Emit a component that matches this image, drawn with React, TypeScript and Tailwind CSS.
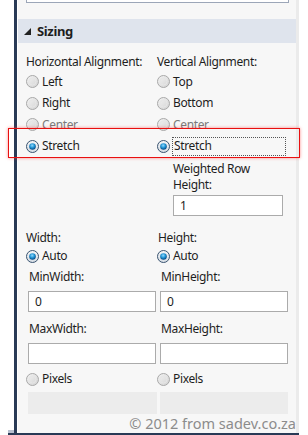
import React from "react";

function Radio({ checked }: { checked?: boolean }) {
  if (checked) {
    return (
      <svg width="13" height="13" viewBox="0 0 13 13" className="shrink-0">
        <defs>
          <radialGradient id="rb" cx="0.45" cy="0.35" r="0.6">
            <stop offset="0" stopColor="#8fd8ff" />
            <stop offset="0.6" stopColor="#1a8fd0" />
            <stop offset="1" stopColor="#0b4f8a" />
          </radialGradient>
          <linearGradient id="rbo" x1="0" y1="0" x2="0" y2="1">
            <stop offset="0" stopColor="#f4f6f8" />
            <stop offset="1" stopColor="#d6dde4" />
          </linearGradient>
        </defs>
        <circle cx="6.5" cy="6.5" r="6" fill="url(#rbo)" stroke="#3a5470" strokeWidth="1" />
        <circle cx="6.5" cy="6.5" r="3.3" fill="url(#rb)" />
      </svg>
    );
  }
  return (
    <svg width="13" height="13" viewBox="0 0 13 13" className="shrink-0">
      <defs>
        <linearGradient id="ru" x1="0" y1="0" x2="1" y2="1">
          <stop offset="0" stopColor="#f4f4f4" />
          <stop offset="1" stopColor="#d2d2d2" />
        </linearGradient>
      </defs>
      <circle cx="6.5" cy="6.5" r="6" fill="url(#ru)" stroke="#a8a8a8" strokeWidth="1" />
      <circle cx="6.5" cy="6.5" r="3.5" fill="none" stroke="#e6e6e6" strokeWidth="1" />
    </svg>
  );
}

function RadioRow({ label, checked, focus, gray }: { label: string; checked?: boolean; focus?: boolean; gray?: boolean }) {
  return (
    <div className="flex h-[21.5px] items-center">
      <Radio checked={checked} />
      {focus ? (
        <span className="ml-[2px] flex h-[19px] w-[114px] items-center border border-dotted border-[#555] pl-[1px] text-[#1e1e1e]">
          {label}
        </span>
      ) : (
        <span className={"ml-[3px] " + (gray ? "text-[#7a7a7a]" : "text-[#1e1e1e]")}>{label}</span>
      )}
    </div>
  );
}

function TextBox({ value, className }: { value?: string; className?: string }) {
  return (
    <div className={"flex items-center border border-[#ababab] bg-white pl-[6px] text-[#1e1e1e] " + (className ?? "")}>
      {value}
    </div>
  );
}

export default function App() {
  return (
    <div
      className="relative flex h-[435px] w-[308px] flex-col overflow-hidden bg-white text-[12px] leading-[16px] tracking-[-0.35px] text-[#1e1e1e]"
      style={{ fontFamily: '"Noto Sans", "Open Sans", sans-serif' }}
    >
      <div className="flex h-[433px]">
        <div className="flex w-[14px] flex-col justify-end">
          <div className="ml-[8px] h-[3px] w-[6px] bg-[#b8c0d0]" />
        </div>
        <div className="flex w-[285px] border-l-[3px] border-[#293a56] pl-[1px]">
          <div className="flex flex-1 flex-col bg-[#f7f7f7]">
            {/* top textbox remnant */}
            <div className="ml-[8px] h-[3px] w-[263px] border-x border-b border-[#9ca6b8] bg-white" />
            <div className="h-[16px]" />
            {/* header */}
            <div className="flex h-[24px] items-center bg-[#dfe4ed] pl-[6px]">
              <svg width="7" height="7" viewBox="0 0 7 7" className="mr-[6px]">
                <polygon points="7,0 7,7 0,7" fill="#222" />
              </svg>
              <span className="text-[13px] font-bold text-[#1e1e1e]">Sizing</span>
            </div>

            <div className="grid grid-cols-[131px_131px] pl-[8px]">
              <div className="flex flex-col pt-[10px]">
                <div className="h-[18px] leading-[18px]">Horizontal Alignment:</div>
                <RadioRow label="Left" />
                <RadioRow label="Right" />
                <RadioRow label="Center" gray />
                <RadioRow label="Stretch" checked />
              </div>
              <div className="flex flex-col pt-[10px]">
                <div className="h-[18px] leading-[18px]">Vertical Alignment:</div>
                <RadioRow label="Top" />
                <RadioRow label="Bottom" />
                <RadioRow label="Center" gray />
                <RadioRow label="Stretch" checked focus />
                <div className="ml-[16px] mt-[4px] flex flex-col">
                  <div className="h-[16px]">Weighted Row</div>
                  <div className="h-[16px]">Height:</div>
                  <TextBox value="1" className="mt-[2px] h-[21px] w-[110px]" />
                </div>
              </div>

              <div className="col-span-2 grid grid-cols-[131px_131px] pt-[13px]">
                <div className="flex flex-col">
                  <div className="h-[18px] leading-[18px]">Width:</div>
                  <div className="flex h-[18px] items-center">
                    <Radio checked />
                    <span className="ml-[3px]">Auto</span>
                  </div>
                  <div className="ml-[3px] mt-[3px] h-[18px] leading-[18px]">MinWidth:</div>
                  <TextBox value="0" className="ml-[2px] mt-[5px] h-[21px] w-[128px]" />
                  <div className="ml-[3px] mt-[8px] h-[18px] leading-[18px]">MaxWidth:</div>
                  <TextBox className="ml-[2px] mt-[5px] h-[21px] w-[128px]" />
                  <div className="mt-[6px] flex h-[18px] items-center">
                    <Radio />
                    <span className="ml-[3px]">Pixels</span>
                  </div>
                  <div className="ml-[2px] mt-[4px] h-[22px] w-[129px] bg-[#ececec]" />
                </div>
                <div className="flex flex-col">
                  <div className="ml-[1px] h-[18px] leading-[18px]">Height:</div>
                  <div className="flex h-[18px] items-center">
                    <Radio checked />
                    <span className="ml-[3px]">Auto</span>
                  </div>
                  <div className="ml-[4px] mt-[3px] h-[18px] leading-[18px]">MinHeight:</div>
                  <TextBox value="0" className="ml-[3px] mt-[5px] h-[21px] w-[128px]" />
                  <div className="ml-[4px] mt-[8px] h-[18px] leading-[18px]">MaxHeight:</div>
                  <TextBox className="ml-[3px] mt-[5px] h-[21px] w-[128px]" />
                  <div className="mt-[6px] flex h-[18px] items-center">
                    <Radio />
                    <span className="ml-[3px]">Pixels</span>
                  </div>
                  <div className="ml-[3px] mt-[4px] h-[22px] w-[128px] bg-[#ececec]" />
                </div>
              </div>
            </div>
          </div>
          <div className="w-[3px] bg-[#ebebeb]" />
        </div>
      </div>
      {/* bottom navy line */}
      <div className="ml-[8px] h-[2px] w-[291px] bg-[#293a56]" />

      {/* highlight annotation */}
      <div className="pointer-events-none absolute left-[8px] top-[128px] h-[30px] w-[292px] border border-[#e81010] shadow-[0_0_3px_rgba(255,60,60,0.6)]" />

      {/* watermark */}
      <div className="absolute right-[12px] top-[414px] text-[14.5px] leading-[18px] tracking-normal text-[#8c8c8c]">
        © 2012 from sadev.co.za
      </div>
    </div>
  );
}
